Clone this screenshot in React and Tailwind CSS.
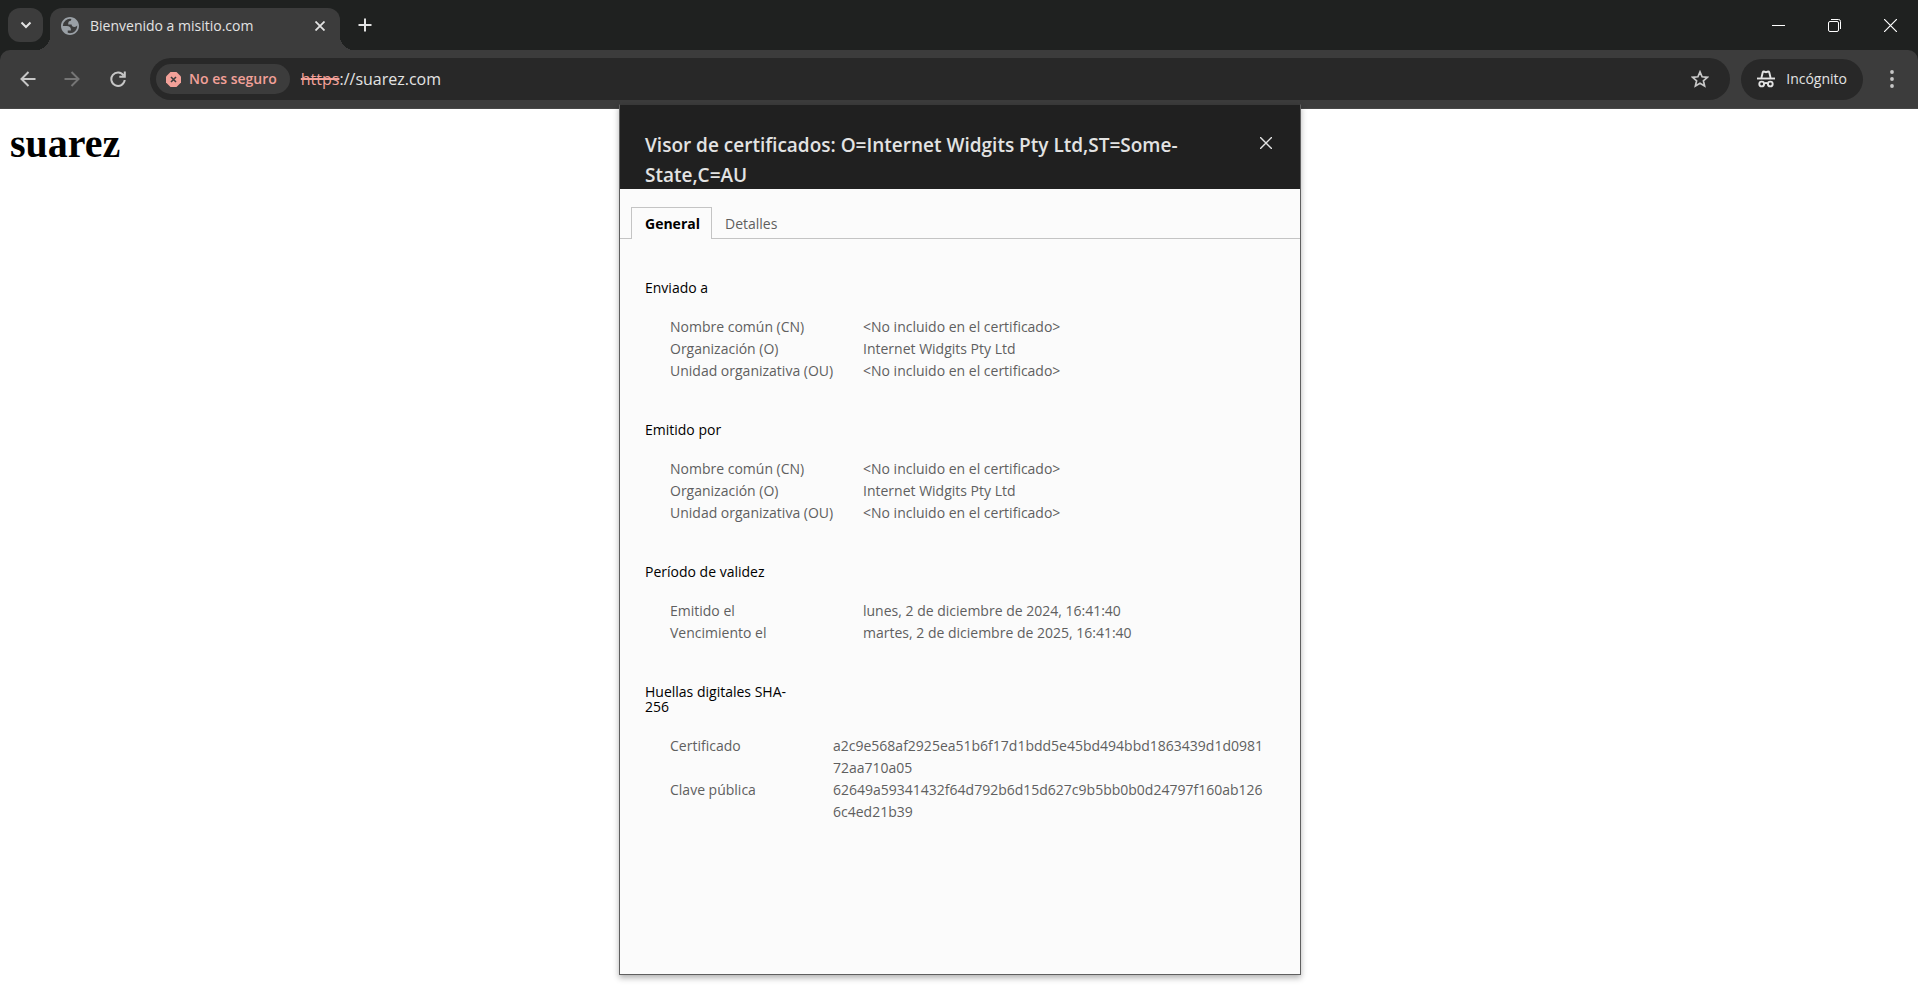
import React from "react";

const sections = [
  {
    title: "Enviado a",
    cols: "grid-cols-[193px_1fr]",
    rows: [
      ["Nombre común (CN)", "<No incluido en el certificado>"],
      ["Organización (O)", "Internet Widgits Pty Ltd"],
      ["Unidad organizativa (OU)", "<No incluido en el certificado>"],
    ],
  },
  {
    title: "Emitido por",
    cols: "grid-cols-[193px_1fr]",
    rows: [
      ["Nombre común (CN)", "<No incluido en el certificado>"],
      ["Organización (O)", "Internet Widgits Pty Ltd"],
      ["Unidad organizativa (OU)", "<No incluido en el certificado>"],
    ],
  },
  {
    title: "Período de validez",
    cols: "grid-cols-[193px_1fr]",
    rows: [
      ["Emitido el", "lunes, 2 de diciembre de 2024, 16:41:40"],
      ["Vencimiento el", "martes, 2 de diciembre de 2025, 16:41:40"],
    ],
  },
  {
    title: "Huellas digitales SHA-256",
    cols: "grid-cols-[163px_1fr]",
    rows: [
      ["Certificado", "a2c9e568af2925ea51b6f17d1bdd5e45bd494bbd1863439d1d098172aa710a05"],
      ["Clave pública", "62649a59341432f64d792b6d15d627c9b5bb0b0d24797f160ab1266c4ed21b39"],
    ],
  },
];

function Globe() {
  return (
    <svg viewBox="2 2 20 20" className="size-[18px]" fill="#9aa0a6" aria-hidden="true">
      <path
        fillRule="evenodd"
        d="M12 22C6.477 22 2 17.523 2 12S6.477 2 12 2s10 4.477 10 10-4.477 10-10 10zM4 12h4.400c3.407.022 4.922 1.730 4.543 5.127H9.488v2.470a8.004 8.004 0 0 0 10.498-8.083C19.327 12.504 18.332 13 17 13c-2.137 0-3.206-.916-3.206-2.750h-3.748c-.274-2.728.683-4.092 2.870-4.092 0-.975.327-1.597.811-1.970A8.004 8.004 0 0 0 4 12z"
      />
    </svg>
  );
}

function Incognito() {
  return (
    <svg viewBox="0 0 18 18" className="size-[18px]" fill="none" stroke="#e3e3e3" strokeWidth="1.9" aria-hidden="true">
      <path d="M0 8.500h18" />
      <path d="M4.400 8 5.800 2c.1-.5.5-.7.9-.5l2.300.7 2.300-.7c.4-.2.8 0 .9.5l1.400 6" />
      <circle cx="4.700" cy="14" r="2.400" />
      <circle cx="13.300" cy="14" r="2.400" />
      <path d="M7 13.500c1.200-.7 2.800-.7 4 0" />
    </svg>
  );
}

function TabStrip() {
  return (
    <header className="flex h-[50px] items-end bg-[#1f2120] pl-2 text-[#e3e3e3]">
      <button aria-label="Buscar pestañas" className="mb-2 flex h-[34px] w-[35px] items-center justify-center rounded-xl bg-[#3c3c3c]">
        <svg viewBox="0 0 12 12" className="size-3" fill="none" stroke="currentColor" strokeWidth="2" aria-hidden="true">
          <path d="M1.500 3.500 6 8l4.500-4.500" />
        </svg>
      </button>
      <div className="relative ml-[7px] flex h-[42px] w-[290px] items-center rounded-t-xl bg-[#3c3c3c] pr-3 pb-[7px] pl-[11px] before:absolute before:bottom-0 before:-left-[14px] before:size-[14px] before:bg-[radial-gradient(circle_at_0_0,transparent_14px,#3c3c3c_14px)] after:absolute after:-right-[14px] after:bottom-0 after:size-[14px] after:bg-[radial-gradient(circle_at_100%_0,transparent_14px,#3c3c3c_14px)]">
        <Globe />
        <span className="ml-[11px] flex-1 text-sm">Bienvenido a misitio.com</span>
        <button aria-label="Cerrar pestaña" className="flex size-4 items-center justify-center">
          <svg viewBox="0 0 10 10" className="size-[10px]" fill="none" stroke="currentColor" strokeWidth="1.8" aria-hidden="true">
            <path d="m.5.5 9 9m0-9-9 9" />
          </svg>
        </button>
      </div>
      <button aria-label="Nueva pestaña" className="mb-[18px] ml-[18px] flex size-[14px] items-center justify-center">
        <svg viewBox="0 0 14 14" className="size-[14px]" fill="none" stroke="currentColor" strokeWidth="2" aria-hidden="true">
          <path d="M7 .5v13M.5 7h13" />
        </svg>
      </button>
      <div className="ml-auto flex text-white">
        <button aria-label="Minimizar" className="flex h-[50px] w-14 items-center justify-center">
          <svg viewBox="0 0 13 13" className="size-[13px]" stroke="currentColor" aria-hidden="true">
            <path d="M0 6.500h13" />
          </svg>
        </button>
        <button aria-label="Restaurar" className="flex h-[50px] w-14 items-center justify-center">
          <svg viewBox="0 0 13 13" className="size-[13px]" fill="none" stroke="currentColor" aria-hidden="true">
            <rect x=".5" y="2.500" width="10" height="10" rx="1.500" />
            <path d="M3 .5h7.500a2 2 0 0 1 2 2V10" />
          </svg>
        </button>
        <button aria-label="Cerrar" className="flex h-[50px] w-14 items-center justify-center">
          <svg viewBox="0 0 13 13" className="size-[13px]" fill="none" stroke="currentColor" strokeWidth="1.2" aria-hidden="true">
            <path d="m0 0 13 13M13 0 0 13" />
          </svg>
        </button>
      </div>
    </header>
  );
}

function Toolbar() {
  return (
    <div className="bg-[#1f2120]">
      <nav className="flex h-[59px] items-center rounded-t-[10px] border-b border-[#474747] bg-[#3c3c3c] pr-[21px] pl-5 text-[#c7c7c7]">
        <button aria-label="Atrás">
          <svg viewBox="0 0 16 16" className="size-4" fill="none" stroke="currentColor" strokeWidth="2" aria-hidden="true">
            <path d="M15.500 8H2M8.500 1 1.500 8l7 7" />
          </svg>
        </button>
        <button aria-label="Adelante" className="ml-[28px] text-[#757575]">
          <svg viewBox="0 0 16 16" className="size-4" fill="none" stroke="currentColor" strokeWidth="2" aria-hidden="true">
            <path d="M.5 8H14M7.500 1l7 7-7 7" />
          </svg>
        </button>
        <button aria-label="Volver a cargar" className="ml-[30px]">
          <svg viewBox="0 0 16 16" className="size-4" fill="none" stroke="currentColor" strokeWidth="2" aria-hidden="true">
            <path d="M13.600 4.500A6.700 6.700 0 1 0 14.700 9M14.800.5v5.300H9.300" />
          </svg>
        </button>
        <div className="ml-[24px] flex h-[42px] flex-1 items-center rounded-full bg-[#282828] pr-[21px] pl-[6px]">
          <button className="flex h-[30px] items-center gap-2 rounded-full bg-[#3c3c3c] pr-[13px] pl-[10px] text-sm font-semibold text-[#f3a199]">
            <svg viewBox="0 0 15 15" className="size-[15px]" aria-hidden="true">
              <path fill="currentColor" d="M4.500 0h6L15 4.500v6L10.500 15h-6L0 10.500v-6z" />
              <path stroke="#3c3c3c" strokeWidth="1.600" d="m5 5 5 5m0-5-5 5" />
            </svg>
            No es seguro
          </button>
          <label htmlFor="url" className="ml-[11px] text-base text-[#f3a199]">
            <s className="decoration-2">https</s>
          </label>
          <input id="url" defaultValue="://suarez.com" className="min-w-0 flex-1 bg-transparent text-base text-[#e3e3e3] outline-none" />
          <button aria-label="Agregar a favoritos">
            <svg viewBox="0 0 18 18" className="size-[18px]" fill="none" stroke="currentColor" strokeWidth="1.700" aria-hidden="true">
              <path d="m9 1.900 2.100 4.900 5.300.5-4 3.500 1.200 5.200L9 13.200 4.400 16l1.200-5.200-4-3.500 5.300-.5z" />
            </svg>
          </button>
        </div>
        <button className="ml-[11px] flex h-[41px] items-center gap-[11px] rounded-full bg-[#282828] pr-4 pl-4 text-sm text-[#e3e3e3]">
          <Incognito />
          Incógnito
        </button>
        <button aria-label="Menú" className="ml-[24px]">
          <svg viewBox="0 0 10 18" className="h-[18px] w-[10px]" fill="currentColor" aria-hidden="true">
            <circle cx="5" cy="2" r="1.900" />
            <circle cx="5" cy="9" r="1.900" />
            <circle cx="5" cy="16" r="1.900" />
          </svg>
        </button>
      </nav>
    </div>
  );
}

function CertificateDialog() {
  return (
    <div role="dialog" aria-labelledby="cert-title" className="w-[682px] border border-[#5f5f5f] border-t-[#383838] bg-[#fbfbfb] text-sm shadow-[0_3px_6px_rgba(0,0,0,0.3)]">
      <div className="flex h-[84px] items-start justify-between bg-[#202020] pt-[25px] pr-7 pl-[25px] text-[#e3e3e3]">
        <h2 id="cert-title" className="w-[560px] text-[19px] leading-[30px] font-semibold">
          Visor de certificados: O=Internet Widgits Pty Ltd,ST=Some-State,C=AU
        </h2>
        <button aria-label="Cerrar visor" className="mt-[7px]">
          <svg viewBox="0 0 12 12" className="size-3" fill="none" stroke="currentColor" strokeWidth="1.400" aria-hidden="true">
            <path d="m0 0 12 12M12 0 0 12" />
          </svg>
        </button>
      </div>
      <div role="tablist" className="flex h-[50px] items-end border-b border-[#c4c4c4] pl-[11px]">
        <button role="tab" aria-selected="true" className="-mb-px h-8 border border-b-0 border-[#c4c4c4] bg-[#fbfbfb] pr-[11px] pl-[13px] font-bold text-black">
          General
        </button>
        <button role="tab" aria-selected="false" className="h-[29px] px-[13px] text-[#5f5f5f]">
          Detalles
        </button>
      </div>
      <div className="flex flex-col gap-10 pt-[41px] pr-8 pb-[151px] pl-[25px]">
        {sections.map((s) => (
          <section key={s.title}>
            <h3 className="w-40 leading-[15px] text-black">{s.title}</h3>
            <dl className="mt-[21px] pl-[25px] text-[#5f5f5f]">
              {s.rows.map(([k, v]) => (
                <div key={k} className={"grid leading-[22px] " + s.cols}>
                  <dt>{k}</dt>
                  <dd className="break-all">{v}</dd>
                </div>
              ))}
            </dl>
          </section>
        ))}
      </div>
    </div>
  );
}

export default function App() {
  return (
    <div className="flex min-h-screen flex-col bg-white font-['Open_Sans','Noto_Sans',sans-serif]">
      <TabStrip />
      <Toolbar />
      <main className="relative flex-1">
        <h1 className="px-[10px] pt-[13px] font-['Liberation_Serif',serif] text-[40px] leading-[44px] font-bold text-black">suarez</h1>
        <div className="absolute inset-x-0 -top-[5px] flex justify-center pl-0.5">
          <CertificateDialog />
        </div>
      </main>
    </div>
  );
}
